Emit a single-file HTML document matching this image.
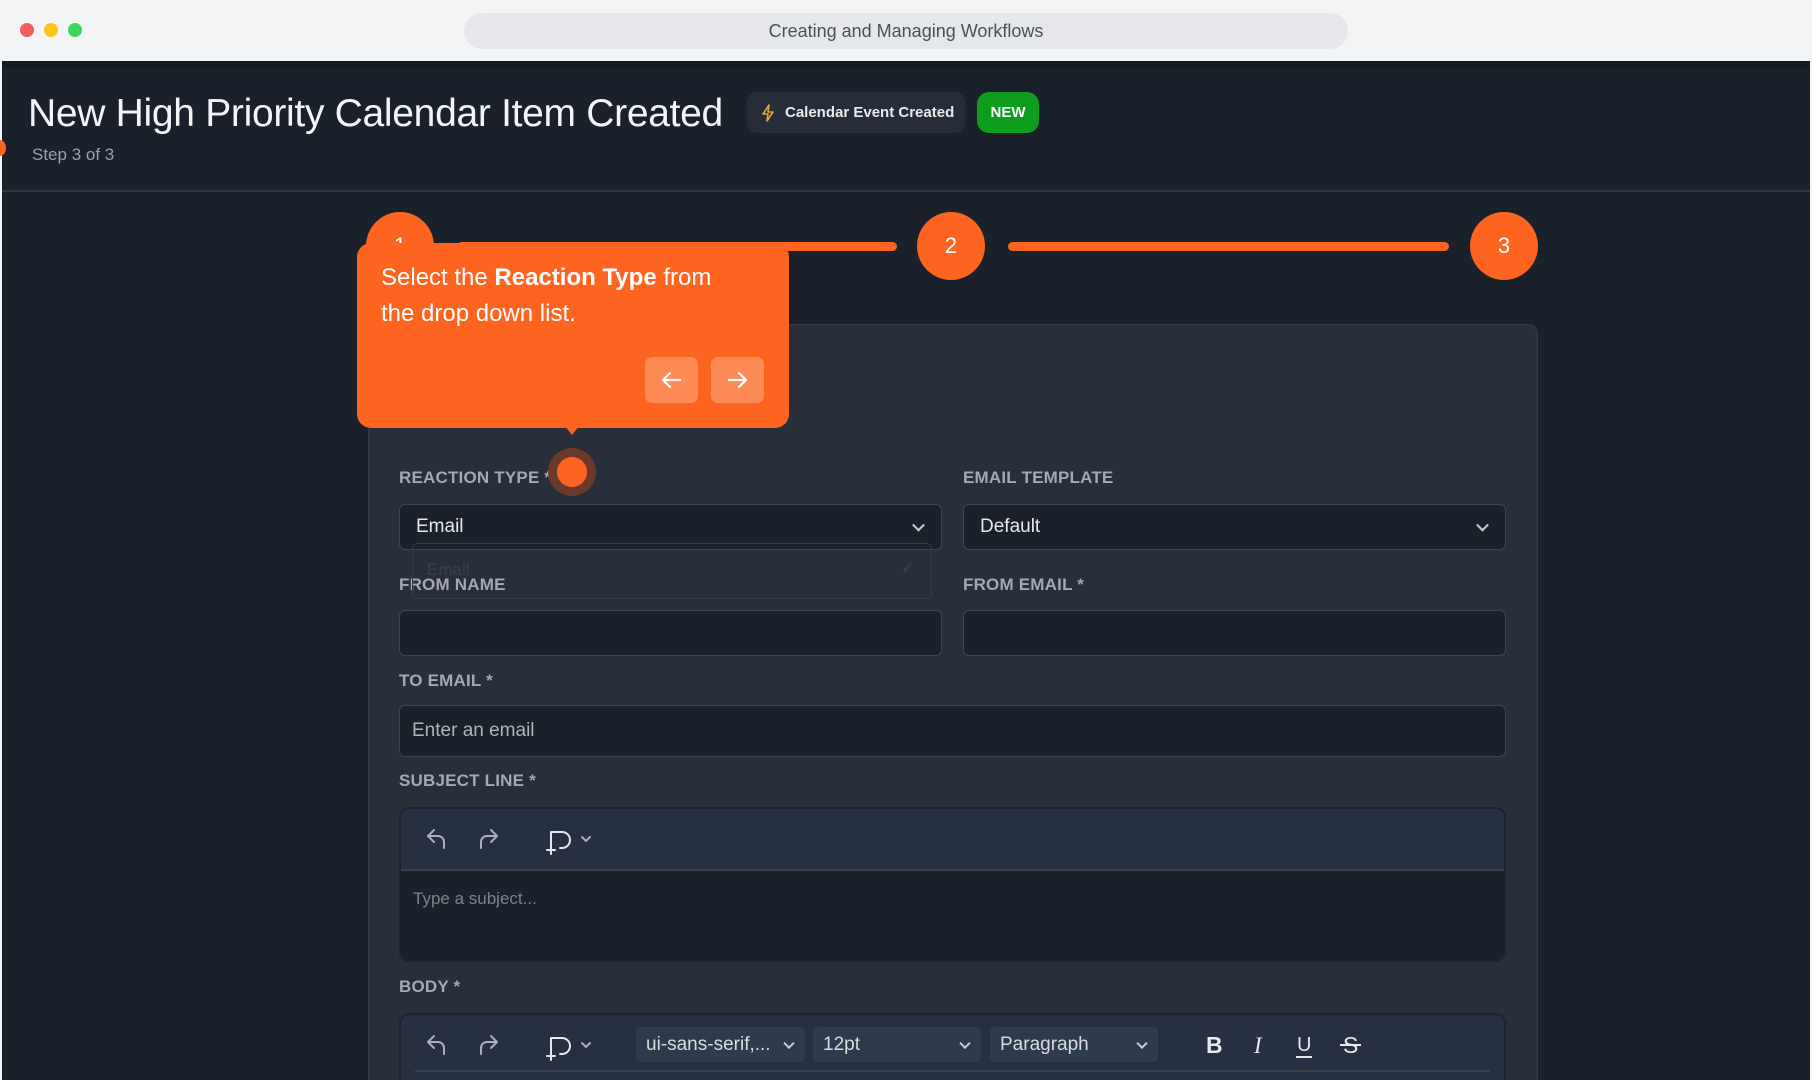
<!DOCTYPE html><html><head><style>
*{box-sizing:border-box;margin:0;padding:0}
html,body{width:1812px;height:1080px;overflow:hidden}
body{background:#f3f4f6;font-family:"Liberation Sans",sans-serif;position:relative}
.a{position:absolute}
.dark{left:2px;top:61px;width:1808px;height:1019px;background:#1a212b}
.lbl{position:absolute;color:#a3a8b1;font-size:17px;font-weight:bold;letter-spacing:0.2px}
.inp{position:absolute;background:#1a212b;border:1.5px solid #3d4451;border-radius:6px;color:#e6e8eb;font-size:19px;padding-left:16px;display:flex;align-items:center}
.chev{position:absolute;right:18px;top:50%;width:9px;height:9px;border-right:2px solid #c8ccd2;border-bottom:2px solid #c8ccd2;transform:translateY(-70%) rotate(45deg)}
.sel{position:absolute;background:#2e3a4e;border-radius:4px;color:#d8dbe0;font-size:19px;display:flex;align-items:center;padding-left:10px;height:35px;top:1027px}
.sel .chev{right:12px;width:8px;height:8px}
.circ{position:absolute;width:68px;height:68px;border-radius:50%;background:#fd6420;color:#fff;font-size:22px;display:flex;align-items:center;justify-content:center}
</style></head><body>
<div class="a" style="left:20px;top:23px;width:14px;height:14px;border-radius:50%;background:#f25f5c"></div>
<div class="a" style="left:44px;top:23px;width:14px;height:14px;border-radius:50%;background:#fbc619"></div>
<div class="a" style="left:68px;top:23px;width:14px;height:14px;border-radius:50%;background:#3ed65f"></div>
<div class="a" style="left:464px;top:13px;width:884px;height:36px;border-radius:18px;background:#e5e7eb;color:#4b5058;font-size:18px;display:flex;align-items:center;justify-content:center">Creating and Managing Workflows</div>
<div class="a dark"></div>
<div class="a" style="left:2px;top:61px;width:1808px;height:6px;background:#151b23"></div>
<div class="a" style="left:28px;top:92px;color:#f3f4f6;font-size:39px;white-space:nowrap;letter-spacing:-0.3px">New High Priority Calendar Item Created</div>
<div class="a" style="left:747px;top:92px;width:218px;height:41px;border-radius:10px;background:#262d38;color:#e8eaed;font-size:15px;font-weight:bold;display:flex;align-items:center;padding-left:14px"><svg width="14" height="18" viewBox="0 0 14 18" style="margin-right:10px"><path d="M8 1L2 10h5l-1 7 6-9H7l1-7z" fill="none" stroke="#e2a33a" stroke-width="1.6" stroke-linejoin="round"/></svg>Calendar Event Created</div>
<div class="a" style="left:977px;top:92px;width:62px;height:41px;border-radius:12px;background:#0f9d1d;color:#fff;font-size:15px;font-weight:bold;display:flex;align-items:center;justify-content:center">NEW</div>
<div class="a" style="left:32px;top:145px;color:#9ba1aa;font-size:17px">Step 3 of 3</div>
<div class="a" style="left:-6px;top:140px;width:12px;height:16px;border-radius:50%;background:#fd6420"></div>
<div class="a" style="left:2px;top:190px;width:1808px;height:2px;background:#2f3641"></div>
<div class="a" style="left:457px;top:242px;width:440px;height:9px;border-radius:5px;background:#fd6420"></div>
<div class="a" style="left:1008px;top:242px;width:441px;height:9px;border-radius:5px;background:#fd6420"></div>
<div class="circ" style="left:366px;top:212px">1</div>
<div class="circ" style="left:917px;top:212px">2</div>
<div class="circ" style="left:1470px;top:212px">3</div>
<div class="a" style="left:368px;top:324px;width:1170px;height:756px;background:#282e3a;border:1.5px solid #353c48;border-bottom:none;border-radius:10px 10px 0 0"></div>
<div class="lbl" style="left:399px;top:468px">REACTION TYPE *</div>
<div class="lbl" style="left:963px;top:468px">EMAIL TEMPLATE</div>
<div class="inp" style="left:399px;top:504px;width:543px;height:46px">Email<span class="chev"></span></div>
<div class="inp" style="left:963px;top:504px;width:543px;height:46px">Default<span class="chev"></span></div>
<div class="lbl" style="left:399px;top:575px">FROM NAME</div>
<div class="lbl" style="left:963px;top:575px">FROM EMAIL *</div>
<div class="a" style="left:412px;top:543px;width:520px;height:56px;border:1.5px solid #343b47;border-radius:5px;color:#3a414d;font-size:17px;padding:16px 14px">Email<span style="position:absolute;right:16px;top:14px">✓</span></div>
<div class="inp" style="left:399px;top:610px;width:543px;height:46px"></div>
<div class="inp" style="left:963px;top:610px;width:543px;height:46px"></div>
<div class="lbl" style="left:399px;top:671px">TO EMAIL *</div>
<div class="inp" style="left:399px;top:705px;width:1107px;height:52px;color:#aeb3ba;padding-left:12px">Enter an email</div>
<div class="lbl" style="left:399px;top:771px">SUBJECT LINE *</div>
<div class="a" style="left:399px;top:807px;width:1107px;height:155px;border:2px solid #1d2430;border-radius:10px;background:#1a212b;overflow:hidden">
<div style="height:62px;background:#263042;border-bottom:2px solid #37404f"></div>
<div style="color:#7d838c;font-size:17px;padding:18px 12px">Type a subject...</div></div>
<div class="lbl" style="left:399px;top:977px">BODY *</div>
<div class="a" style="left:399px;top:1013px;width:1107px;height:80px;border:2px solid #1d2430;border-bottom:none;border-radius:10px 10px 0 0;background:#263042"></div>
<div class="a" style="left:415px;top:1070px;width:1075px;height:2px;background:#37404f"></div>
<svg class="a" style="left:0;top:0" width="1812" height="1080">
<g fill="none" stroke="#a9afb8" stroke-width="2" stroke-linecap="round" stroke-linejoin="round">
<g id="tb"><path d="M434 830l-6 6 6 6M428 836h10a6 6 0 0 1 6 6v6"/><path d="M491 830l6 6-6 6M497 836h-10a6 6 0 0 0-6 6v6"/><path d="M551 846v-14h11a8 8 0 0 1 0 16h-2M551 846v8M547 850h8" stroke="#e6e8eb"/><path d="M582 837l4 4 4-4"/></g>
<use href="#tb" y="206"/>
</g>
<g fill="#e6e8eb" font-family="Liberation Sans" font-size="23">
<text x="1206" y="1053" font-weight="bold">B</text>
<text x="1254" y="1053" font-style="italic" font-family="Liberation Serif">I</text>
<text x="1297" y="1051" font-size="20">U</text><rect x="1296" y="1056" width="16" height="2"/>
<text x="1343" y="1053">S</text><rect x="1340" y="1044" width="21" height="2"/>
</g>
</svg>
<div class="sel" style="left:636px;width:169px">ui-sans-serif,...<span class="chev"></span></div>
<div class="sel" style="left:813px;width:168px">12pt<span class="chev"></span></div>
<div class="sel" style="left:990px;width:168px">Paragraph<span class="chev"></span></div>
<div class="a" style="left:357px;top:243px;width:432px;height:185px;background:#fd6420;border-radius:14px;color:#fff;font-size:24px;line-height:36px;padding:17px 56px 16px 24px">Select the <b>Reaction Type</b> from the drop down list.</div>
<div class="a" style="left:565px;top:426px;width:0;height:0;border-left:7px solid transparent;border-right:7px solid transparent;border-top:9px solid #fd6420"></div>
<div class="a" style="left:645px;top:357px;width:53px;height:46px;border-radius:7px;background:#fe8a55"><svg width="53" height="46"><path d="M35 23H18M25 16l-7 7 7 7" fill="none" stroke="#fff" stroke-width="2.2" stroke-linecap="round" stroke-linejoin="round"/></svg></div>
<div class="a" style="left:711px;top:357px;width:53px;height:46px;border-radius:7px;background:#fe8a55"><svg width="53" height="46"><path d="M18 23h17M28 16l7 7-7 7" fill="none" stroke="#fff" stroke-width="2.2" stroke-linecap="round" stroke-linejoin="round"/></svg></div>
<div class="a" style="left:548px;top:448px;width:48px;height:48px;border-radius:50%;background:#6b3a2a"></div>
<div class="a" style="left:557px;top:457px;width:30px;height:30px;border-radius:50%;background:#fd6420"></div>
</body></html>
